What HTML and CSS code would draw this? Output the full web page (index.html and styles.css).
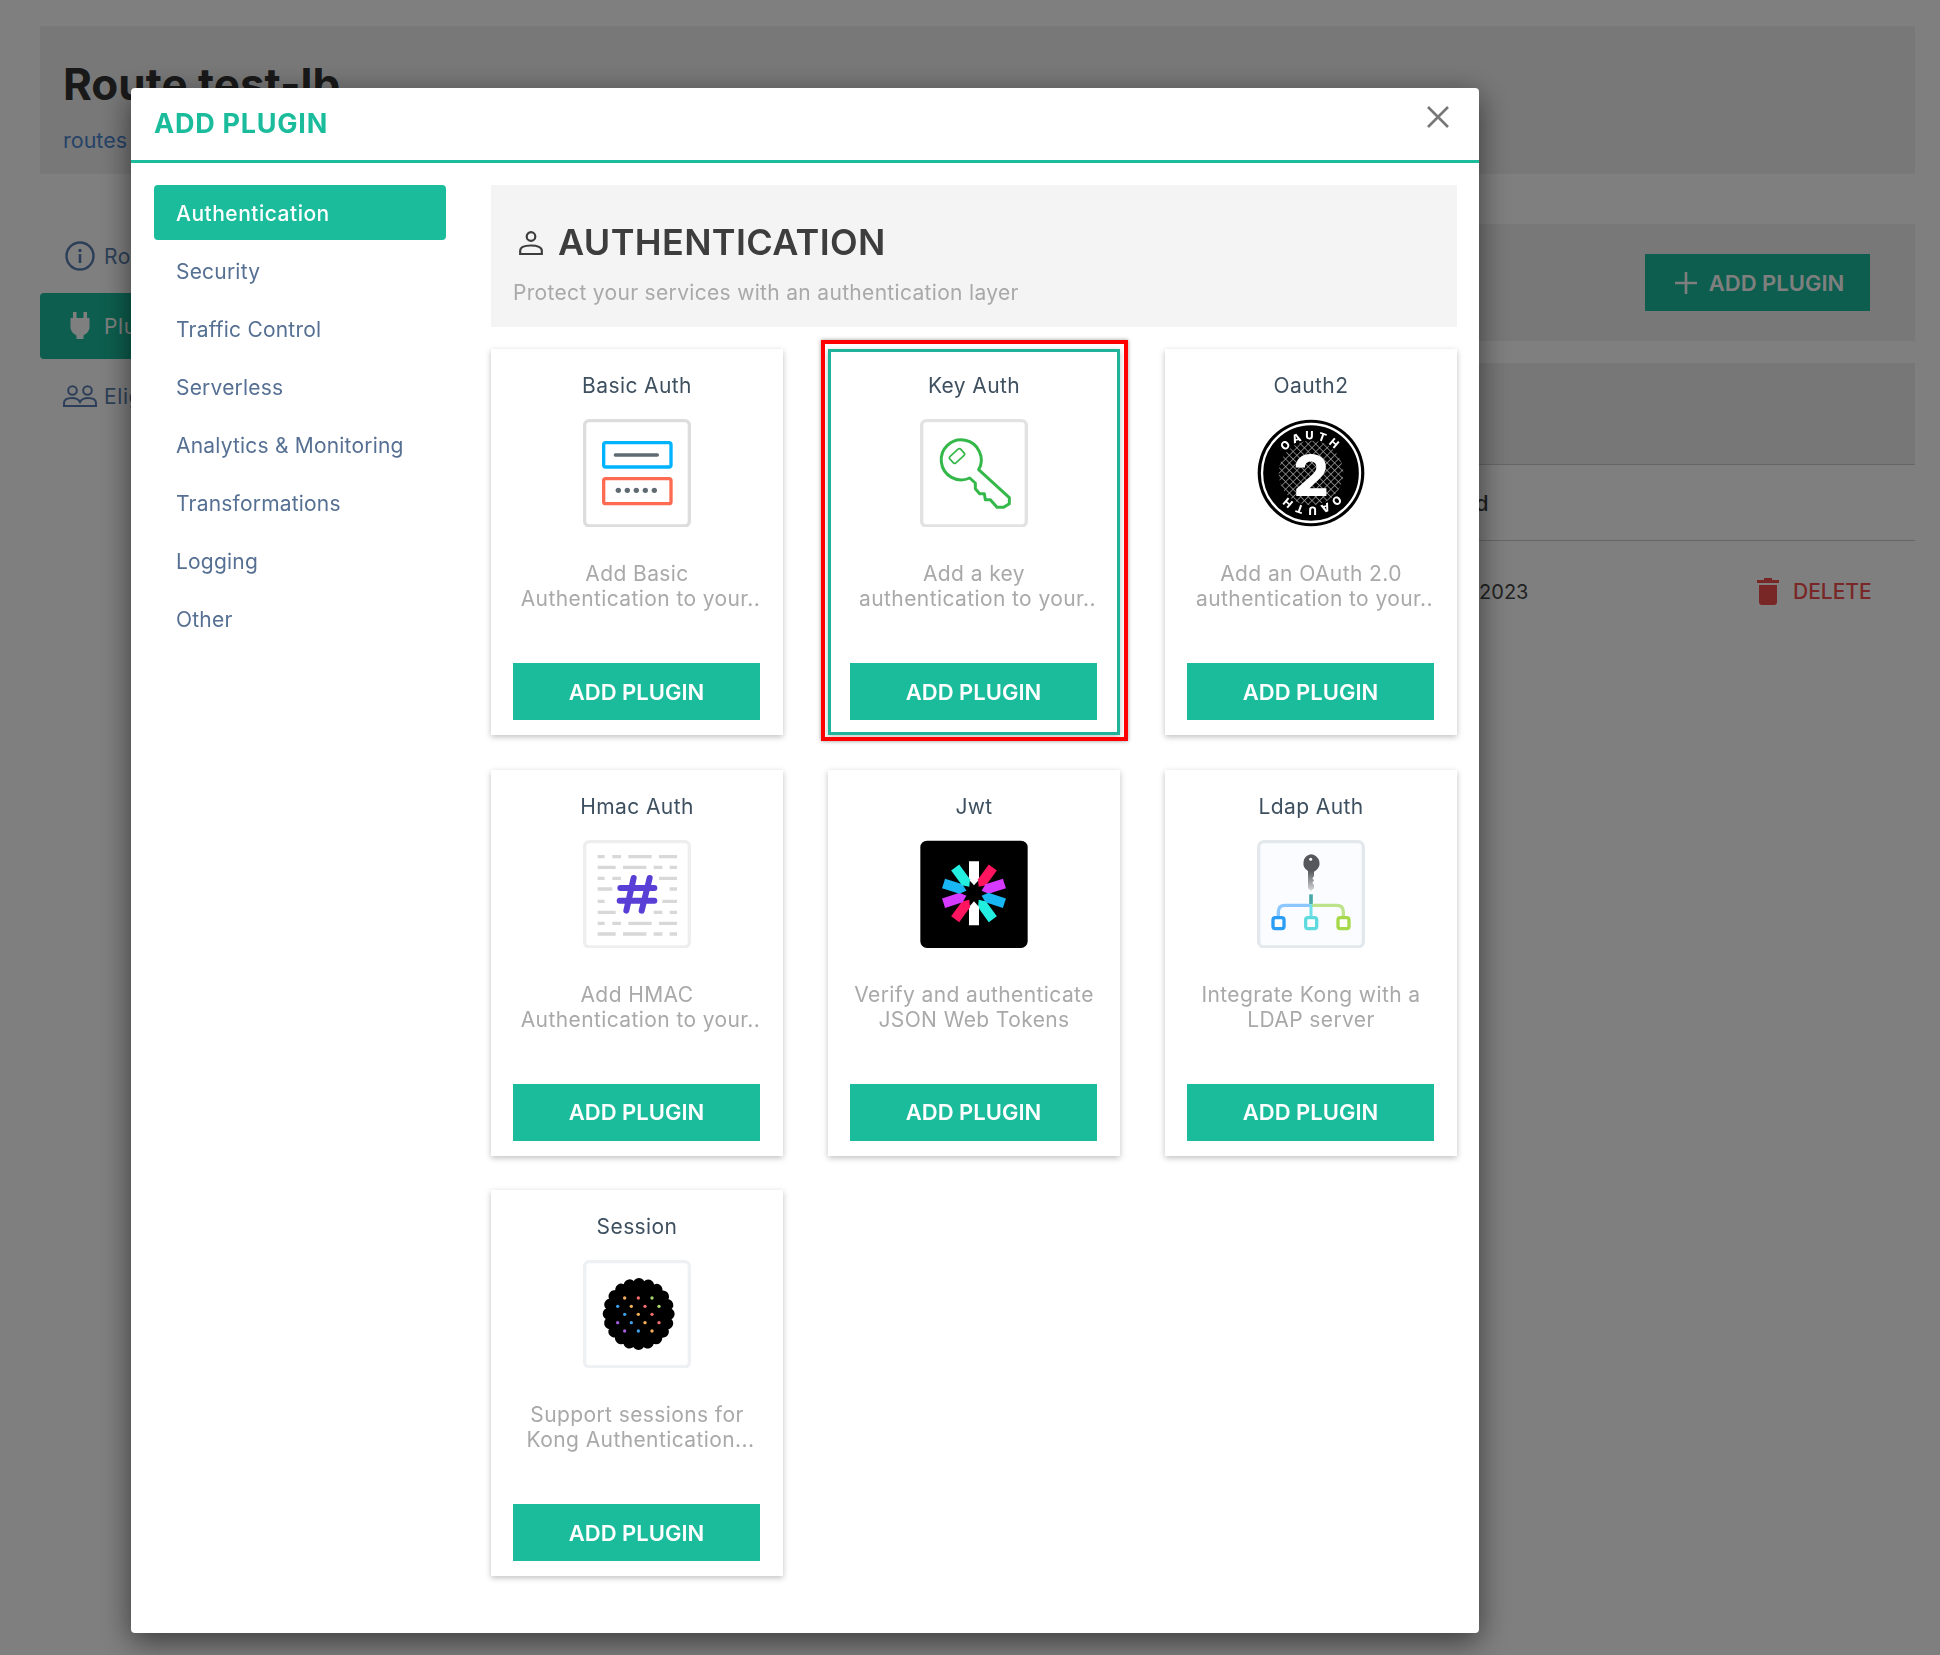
FILE: index.html
```html
<!DOCTYPE html>
<html lang="en">
<head>
  <meta charset="UTF-8">
  <title>Route test-lb</title>
  <link rel="stylesheet" href="styles.css">
</head>
<body>
  <div class="page">
    <header class="route-head">
      <h1>Route test-lb</h1>
      <a class="crumb">routes / test-lb</a>
    </header>
    <div class="route-body">
      <nav class="side">
        <a class="side-item">
          <svg class="side-icon" viewBox="0 0 30 30"><circle cx="15" cy="15" r="13.5" fill="none" stroke="currentColor" stroke-width="2.4"/><rect x="13.7" y="13" width="2.6" height="9" fill="currentColor"/><circle cx="15" cy="9.5" r="1.7" fill="currentColor"/></svg>
          Route Details
        </a>
        <a class="side-item active">
          <svg class="side-icon" viewBox="0 0 30 30"><path d="M8 1h3.5v6h7V1H22v6h2.5v9c0 4-3 7-6 8.500V28h-7v-3.500c-3-1.500-6-4.500-6-8.500V7H8z" fill="currentColor"/></svg>
          Plugins
        </a>
        <a class="side-item">
          <svg class="side-icon wide" viewBox="0 0 34 22"><g fill="none" stroke="currentColor" stroke-width="2"><circle cx="9.500" cy="5.500" r="4.300"/><circle cx="24.500" cy="5.500" r="4.300"/><path d="M1 21v-3c0-3 3-5 8-5s7 2 8 4c1-2 3-4 8-4s8 2 8 5v3z"/></g></svg>
          Eligible consumers
        </a>
      </nav>
      <main class="route-main">
        <section class="plugins-bar">
          <h2>Plugins</h2>
          <button class="bar-btn">
            <svg class="plus" viewBox="0 0 22 22"><path d="M11 0V22M0 11H22" stroke="currentColor" stroke-width="2.600" fill="none"/></svg>
            ADD PLUGIN
          </button>
        </section>
        <section class="table-head-panel">
          <p>Plugins enabled on this route</p>
        </section>
        <div class="tbl-row tbl-head">
          <span>Name</span>
          <span class="tbl-date">Created</span>
          <span></span>
        </div>
        <div class="tbl-row">
          <span>key-auth</span>
          <span class="tbl-date">Mar 10, 2023</span>
          <span class="del">
            <svg class="del-icon" viewBox="0 0 22 27"><path d="M7 0h8v2h7v3H0V2h7zM2 7h18v17c0 2-1 3-3 3H5c-2 0-3-1-3-3z" fill="currentColor"/></svg>
            DELETE
          </span>
        </div>
      </main>
    </div>
  </div>

  <div class="overlay">
    <div class="modal">
      <div class="modal-head">
        <h3>ADD PLUGIN</h3>
        <svg class="close" viewBox="0 0 22 22"><path d="M1 1l20 20M21 1L1 21" fill="none" stroke="#777" stroke-width="2.600"/></svg>
      </div>
      <div class="modal-body">
        <ul class="cats">
          <li class="on">Authentication</li>
          <li>Security</li>
          <li>Traffic Control</li>
          <li>Serverless</li>
          <li>Analytics &amp; Monitoring</li>
          <li>Transformations</li>
          <li>Logging</li>
          <li>Other</li>
        </ul>
        <div class="cat-content">
          <div class="cat-head">
            <h4>
              <svg class="cat-icon" viewBox="0 0 24 24"><g fill="none" stroke="#3d3d3d" stroke-width="2.200"><circle cx="12" cy="5.500" r="4.300"/><path d="M1.200 23v-3.500c0-3 4-5 10.800-5s10.800 2 10.800 5V23z"/></g></svg>
              AUTHENTICATION
            </h4>
            <p>Protect your services with an authentication layer</p>
          </div>
          <div class="plugin-grid">

            <div class="plugin">
              <div class="plugin-name">Basic Auth</div>
              <svg class="plugin-icon" viewBox="38 26 324 324">
                <rect x="43" y="31" width="314" height="316" rx="14" fill="#fff" stroke="#ddd" stroke-width="10"/>
                <rect x="100" y="97" width="202" height="73" rx="6" fill="none" stroke="#00b3ff" stroke-width="10"/>
                <path d="M135 134h126" stroke="#5f6b73" stroke-width="10" stroke-linecap="round"/>
                <rect x="100" y="205" width="202" height="75" rx="6" fill="none" stroke="#ff6a52" stroke-width="10"/>
                <g fill="#5f6b73"><circle cx="144" cy="240" r="8"/><circle cx="171" cy="240" r="8"/><circle cx="198" cy="240" r="8"/><circle cx="225" cy="240" r="8"/><circle cx="252" cy="240" r="8"/></g>
              </svg>
              <p class="plugin-desc">Add Basic<br><span class="clip">Authentication to your..</span></p>
              <button class="plugin-btn">ADD PLUGIN</button>
            </div>

            <div class="plugin picked">
              <div class="plugin-name">Key Auth</div>
              <svg class="plugin-icon" viewBox="29 26 324 324">
                <rect x="34" y="31" width="314" height="316" rx="14" fill="#fff" stroke="#e2e2e2" stroke-width="10"/>
                <path d="M205 178L297 262V280L280 291H260L240 268H225L222 250H208L195 235V218L178 203A60 60 0 1 1 205 178Z" fill="none" stroke="#35b84a" stroke-width="9" stroke-linejoin="round"/>
                <rect x="118" y="124" width="44" height="26" rx="6" transform="rotate(-42 140 137)" fill="none" stroke="#35b84a" stroke-width="5"/>
              </svg>
              <p class="plugin-desc">Add a key<br><span class="clip">authentication to your..</span></p>
              <button class="plugin-btn">ADD PLUGIN</button>
              <div class="red-box"></div>
            </div>

            <div class="plugin">
              <div class="plugin-name">Oauth2</div>
              <svg class="plugin-icon" viewBox="50 40 324 324">
                <defs>
                  <pattern id="mesh" width="16" height="16" patternUnits="userSpaceOnUse" patternTransform="rotate(45)">
                    <path d="M0 0H16M0 0V16" stroke="#aaa" stroke-width="4" fill="none"/>
                  </pattern>
                  <path id="oauth-arc" d="M212 202m-101 0a101 101 0 0 1 202 0"/>
                </defs>
                <circle cx="212" cy="202" r="160" fill="#000"/>
                <circle cx="212" cy="202" r="147" fill="none" stroke="#fff" stroke-width="7"/>
                <circle cx="212" cy="202" r="97" fill="url(#mesh)"/>
                <text class="oauth-ring" text-anchor="middle"><textPath href="#oauth-arc" startOffset="50%">OAUTH</textPath></text>
                <text class="oauth-ring" text-anchor="middle" transform="rotate(180 212 202)"><textPath href="#oauth-arc" startOffset="50%">OAUTH</textPath></text>
                <text class="oauth-two" x="212" y="272" text-anchor="middle">2</text>
              </svg>
              <p class="plugin-desc">Add an OAuth 2.0<br><span class="clip">authentication to your..</span></p>
              <button class="plugin-btn">ADD PLUGIN</button>
            </div>

            <div class="plugin">
              <div class="plugin-name">Hmac Auth</div>
              <svg class="plugin-icon" viewBox="38 28 324 324">
                <rect x="43" y="33" width="314" height="316" rx="14" fill="#fff" stroke="#eee" stroke-width="10"/>
                <path d="M82 78h21M126 78h26M174 78h70M266 78h54M82 110h54M158 110h70M250 110h26M298 110h22M82 143h21M126 143h26M266 143h54M82 175h44M298 175h22M82 212h21M276 212h44M82 245h54M250 245h26M298 245h22M82 278h21M126 278h26M174 278h70M266 278h54M82 310h54M158 310h70M250 310h26M298 310h22" stroke="#d8d8d8" stroke-width="10" fill="none"/>
                <path d="M190 142L168 240M238 142L214 240M150 172H252M148 210H252" stroke="#5a3fd6" stroke-width="18" stroke-linecap="round" fill="none"/>
              </svg>
              <p class="plugin-desc">Add HMAC<br><span class="clip">Authentication to your..</span></p>
              <button class="plugin-btn">ADD PLUGIN</button>
            </div>

            <div class="plugin">
              <div class="plugin-name">Jwt</div>
              <svg class="plugin-icon" viewBox="29 26 324 324">
                <rect x="30" y="28" width="322" height="322" rx="20" fill="#000"/>
                <defs><path id="spoke" d="M176 90H206V145L191 162L176 145Z"/></defs>
                <use href="#spoke" fill="#fff"/>
                <use href="#spoke" fill="#ff1460" transform="rotate(36 191 186)"/>
                <use href="#spoke" fill="#d63aff" transform="rotate(72 191 186)"/>
                <use href="#spoke" fill="#18b6f2" transform="rotate(108 191 186)"/>
                <use href="#spoke" fill="#22efe0" transform="rotate(144 191 186)"/>
                <use href="#spoke" fill="#fff" transform="rotate(180 191 186)"/>
                <use href="#spoke" fill="#ff1460" transform="rotate(216 191 186)"/>
                <use href="#spoke" fill="#d63aff" transform="rotate(252 191 186)"/>
                <use href="#spoke" fill="#18b6f2" transform="rotate(288 191 186)"/>
                <use href="#spoke" fill="#22efe0" transform="rotate(324 191 186)"/>
              </svg>
              <p class="plugin-desc">Verify and authenticate<br>JSON Web Tokens</p>
              <button class="plugin-btn">ADD PLUGIN</button>
            </div>

            <div class="plugin">
              <div class="plugin-name">Ldap Auth</div>
              <svg class="plugin-icon" viewBox="21 29 324 324">
                <defs>
                  <linearGradient id="key-fade" x1="0" y1="0" x2="0" y2="1"><stop offset="0.450" stop-color="#54585c"/><stop offset="1" stop-color="#d8dadc"/></linearGradient>
                </defs>
                <rect x="26" y="34" width="314" height="316" rx="16" fill="#fafcff" stroke="#e3e8ec" stroke-width="10"/>
                <path d="M182 72a27 27 0 0 1 10 52V138l-5 6 5 6-5 8 5 6v10l-9 8-9-8V122a27 27 0 0 1 8-50Z" fill="url(#key-fade)"/>
                <circle cx="182" cy="87" r="4.500" fill="#fff"/>
                <path d="M183 192V222" stroke="#4aa9a8" stroke-width="11"/>
                <path d="M180 225H105Q85 225 85 245V258" fill="none" stroke="#8cc8ff" stroke-width="10"/>
                <path d="M186 225H260Q280 225 280 245V258" fill="none" stroke="#bde48b" stroke-width="10"/>
                <path d="M183 222V258" stroke="#6fe0e8" stroke-width="9"/>
                <rect x="69" y="262" width="33" height="33" rx="7" fill="#fff" stroke="#2a9df4" stroke-width="10"/>
                <rect x="167" y="262" width="33" height="33" rx="7" fill="#fff" stroke="#5fdbe0" stroke-width="10"/>
                <rect x="264" y="262" width="33" height="33" rx="7" fill="#fff" stroke="#a5d94a" stroke-width="10"/>
              </svg>
              <p class="plugin-desc">Integrate Kong with a<br>LDAP server</p>
              <button class="plugin-btn">ADD PLUGIN</button>
            </div>

            <div class="plugin">
              <div class="plugin-name">Session</div>
              <svg class="plugin-icon" viewBox="38 28 324 324">
                <rect x="43" y="33" width="314" height="316" rx="14" fill="#fff" stroke="#eef0f3" stroke-width="10"/>
                <circle cx="205" cy="190" r="92" fill="#000"/>
                <circle cx="205" cy="190" r="90" fill="none" stroke="#000" stroke-width="36" stroke-linecap="round" stroke-dasharray="0.100 28.174"/>
                <g fill="#f4b05a"><circle cx="163" cy="142" r="5"/><circle cx="183" cy="167" r="5"/><circle cx="204" cy="191" r="5"/><circle cx="224" cy="216" r="5"/><circle cx="245" cy="241" r="5"/></g>
                <g fill="#f26d6d"><circle cx="204" cy="142" r="5"/><circle cx="224" cy="167" r="5"/><circle cx="245" cy="191" r="5"/><circle cx="266" cy="216" r="5"/></g>
                <g fill="#a8d46f"><circle cx="245" cy="142" r="5"/><circle cx="266" cy="167" r="5"/></g>
                <g fill="#3f9fe8"><circle cx="142" cy="167" r="5"/><circle cx="163" cy="191" r="5"/><circle cx="183" cy="216" r="5"/><circle cx="204" cy="241" r="5"/></g>
                <g fill="#a45be0"><circle cx="142" cy="216" r="5"/><circle cx="163" cy="241" r="5"/></g>
              </svg>
              <p class="plugin-desc">Support sessions for<br><span class="clip">Kong Authentication...</span></p>
              <button class="plugin-btn">ADD PLUGIN</button>
            </div>

          </div>
        </div>
      </div>
    </div>
  </div>
</body>
</html>
```

FILE: styles.css
```css
html {
  font-family: Inter, "Open Sans", sans-serif;
}

body {
  margin: 0;
  height: 1655px;
  overflow: hidden;
  background-color: #fff;
  color: #333;
}

/* page behind the modal */
.page {
  padding: 26px 25px 0 40px;
}

.route-head {
  height: 148px;
  box-sizing: border-box;
  padding: 32px 23px 0;
  background-color: #f0f0f0;
}

.route-head h1 {
  margin: 0;
  font-size: 44px;
  line-height: 52px;
  font-weight: 700;
  color: #333;
}

.crumb {
  display: block;
  margin-top: 17px;
  font-size: 21.5px;
  color: #4d86d0;
}

.route-body {
  display: flex;
  gap: 40px;
  margin-top: 49px;
}

.side {
  width: 300px;
  display: flex;
  flex-direction: column;
  gap: 4px;
}

.side-item {
  height: 66px;
  display: flex;
  align-items: center;
  gap: 9px;
  padding-left: 25px;
  border-radius: 4px;
  font-size: 21px;
  letter-spacing: 0.6px;
  color: #5a7fb0;
}

.side-item.active {
  background-color: #1abc9c;
  color: #fff;
}

.side-icon {
  width: 30px;
  height: 30px;
}

.side-icon.wide {
  width: 34px;
  height: 22px;
  margin-left: -2px;
  margin-right: -2px;
}

.route-main {
  flex: 1;
  margin-top: 1px;
}

.plugins-bar {
  height: 117px;
  display: flex;
  align-items: center;
  justify-content: space-between;
  padding-right: 45px;
  background-color: #f0f0f0;
}

.plugins-bar h2 {
  margin: 0 0 0 25px;
  font-size: 26px;
}

.bar-btn {
  display: flex;
  align-items: center;
  justify-content: center;
  gap: 12px;
  width: 225px;
  height: 57px;
  padding: 0 0 0 4px;
  border: 0;
  background-color: #1abc9c;
  color: #fff;
  font-family: inherit;
  font-size: 22px;
  font-weight: 600;
}

.plus {
  width: 22px;
  height: 22px;
}

.table-head-panel {
  height: 101px;
  margin-top: 22px;
  background-color: #eee;
}

.table-head-panel p {
  margin: 0;
  padding: 36px 25px;
  font-size: 20px;
}

.tbl-row {
  display: grid;
  grid-template-columns: 1fr 352px 158px;
  align-items: center;
  box-sizing: border-box;
  height: 102px;
  border-top: 1px solid #ccc;
  font-size: 20px;
  color: #444;
}

.tbl-head {
  height: 76px;
  font-size: 22px;
  font-weight: 500;
}

.tbl-date {
  white-space: nowrap;
}

.del {
  display: flex;
  align-items: center;
  gap: 14px;
  font-size: 21px;
  color: #f14d4d;
  font-weight: 500;
}

.del-icon {
  width: 22px;
  height: 27px;
}

/* modal */
.overlay {
  position: fixed;
  inset: 0;
  padding: 88px 461px 0 131px;
  background-color: rgba(0, 0, 0, 0.5);
}

.modal {
  height: 1545px;
  background-color: #fff;
  border-radius: 4px;
  box-shadow: 0 8px 30px rgba(0, 0, 0, 0.55);
}

.modal-head {
  height: 72px;
  display: flex;
  align-items: center;
  justify-content: space-between;
  padding: 0 30px 0 23px;
  border-bottom: 3px solid #1abc9c;
}

.modal-head h3 {
  margin: 0 0 2px;
  font-size: 27px;
  font-weight: 700;
  letter-spacing: 0.75px;
  color: #1abc9c;
}

.close {
  width: 22px;
  height: 22px;
  margin-bottom: 14px;
}

.modal-body {
  display: flex;
  gap: 45px;
  padding: 22px 22px 0 23px;
}

.cats {
  width: 292px;
  margin: 0;
  padding: 0;
  list-style-type: none;
}

.cats li {
  height: 55px;
  line-height: 57px;
  margin-bottom: 3px;
  padding-left: 22px;
  border-radius: 4px;
  font-size: 21px;
  letter-spacing: 0.2px;
  color: #567093;
}

.cats li.on {
  background-color: #1abc9c;
  color: #fff;
  font-weight: 500;
  letter-spacing: 0.5px;
}

.cat-content {
  width: 966px;
}

.cat-head {
  height: 142px;
  box-sizing: border-box;
  padding: 35px 22px 0;
  background-color: #f4f4f4;
}

.cat-head h4 {
  display: flex;
  align-items: center;
  gap: 15px;
  margin: 0;
  padding-left: 6px;
  font-size: 36px;
  line-height: 44px;
  font-weight: 600;
  letter-spacing: 0.35px;
  color: #3d3d3d;
}

.cat-icon {
  width: 24px;
  height: 24px;
  margin-top: 2px;
}

.cat-head p {
  margin: 16px 0 0;
  font-size: 21px;
  line-height: 26px;
  letter-spacing: 0.32px;
  color: #a9a9a9;
}

.plugin-grid {
  display: grid;
  grid-template-columns: repeat(3, 292px);
  grid-auto-rows: 386px;
  gap: 34.5px 45px;
  margin-top: 22px;
}

.plugin {
  position: relative;
  display: flex;
  flex-direction: column;
  align-items: center;
  box-sizing: border-box;
  padding: 24px 22px 15px;
  background-color: #fff;
  box-shadow: 0 2px 6px rgba(0, 0, 0, 0.25);
}

.plugin.picked {
  outline: 3px solid #1fb39a;
  outline-offset: -3px;
}

.plugin-name {
  font-size: 21px;
  line-height: 26px;
  letter-spacing: 0.4px;
  color: #3e5060;
  white-space: nowrap;
}

.plugin-icon {
  width: 108px;
  height: 108px;
  margin-top: 20px;
  flex-shrink: 0;
}

.plugin-desc {
  margin: 34px 0 0;
  font-size: 21px;
  line-height: 25px;
  letter-spacing: 0.4px;
  color: #a9a9a9;
  text-align: center;
  white-space: nowrap;
}

/* the cut-off second line sits a bit right of centre */
.clip {
  padding-left: 7px;
}

.plugin-btn {
  align-self: flex-start;
  width: 247px;
  height: 57px;
  margin-top: auto;
  border: 0;
  background-color: #1abc9c;
  color: #fff;
  font-family: inherit;
  font-size: 22px;
  font-weight: 600;
}

.red-box {
  position: absolute;
  top: -9px;
  left: -7px;
  right: -8px;
  bottom: -6px;
  border: 4px solid #f00;
  box-shadow: 0 0 4px rgba(0, 0, 0, 0.4);
}

.oauth-ring {
  font-size: 34px;
  font-weight: 800;
  letter-spacing: 11px;
  fill: #fff;
}

.oauth-two {
  font-size: 168px;
  font-weight: 800;
  fill: #fff;
}
```
